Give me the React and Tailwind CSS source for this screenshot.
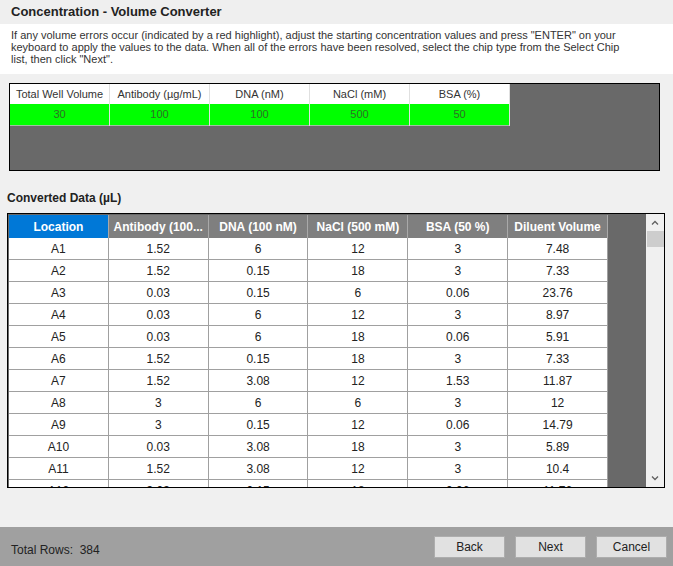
const topCols = [
  { label: "Total Well Volume", value: "30" },
  { label: "Antibody (µg/mL)", value: "100" },
  { label: "DNA (nM)", value: "100" },
  { label: "NaCl (mM)", value: "500" },
  { label: "BSA (%)", value: "50" },
];

const headers = ["Location", "Antibody (100...", "DNA (100 nM)", "NaCl (500 mM)", "BSA (50 %)", "Diluent Volume"];

const rows = [
  ["A1", "1.52", "6", "12", "3", "7.48"],
  ["A2", "1.52", "0.15", "18", "3", "7.33"],
  ["A3", "0.03", "0.15", "6", "0.06", "23.76"],
  ["A4", "0.03", "6", "12", "3", "8.97"],
  ["A5", "0.03", "6", "18", "0.06", "5.91"],
  ["A6", "1.52", "0.15", "18", "3", "7.33"],
  ["A7", "1.52", "3.08", "12", "1.53", "11.87"],
  ["A8", "3", "6", "6", "3", "12"],
  ["A9", "3", "0.15", "12", "0.06", "14.79"],
  ["A10", "0.03", "3.08", "18", "3", "5.89"],
  ["A11", "1.52", "3.08", "12", "3", "10.4"],
  ["A12", "3.03", "0.15", "18", "0.06", "11.76"],
];

const Button = ({ children }) => (
  <button className="w-[71px] h-[22px] bg-[#e1e1e1] border border-[#adadad] text-[12px] text-[#222]">
    {children}
  </button>
);

export default function App() {
  return (
    <div className="w-[673px] h-[566px] bg-[#f0f0f0] flex flex-col overflow-hidden font-['Liberation_Sans',Arial,sans-serif] text-[#222]">
      {/* title */}
      <div className="h-[24px] bg-[#efefef] flex items-center pl-[11px] text-[13px] font-bold">
        Concentration - Volume Converter
      </div>
      <div className="h-[50px] bg-white pl-[11px] pt-[5px] text-[11px] leading-[12px] text-[#333]">
        If any volume errors occur (indicated by a red highlight), adjust the starting concentration values and press "ENTER" on your
        <br />
        keyboard to apply the values to the data. When all of the errors have been resolved, select the chip type from the Select Chip
        <br />
        list, then click "Next".
      </div>

      {/* top grid */}
      <div className="mt-[9px] ml-[9px] w-[651px] h-[88px] border border-black bg-[#696969]">
        <div className="flex">
          {topCols.map((c) => (
            <div key={c.label} className="w-[100px] border-r border-[#e0e0e0]">
              <div className="h-[20px] bg-white flex items-center justify-center text-[11px] text-[#333]">{c.label}</div>
              <div className="h-[22px] bg-[#00ff00] flex items-center justify-center text-[11px] text-[#2f6f25] border-b border-[#a0c0a0]">
                {c.value}
              </div>
            </div>
          ))}
        </div>
      </div>

      <div className="mt-[18px] ml-[7px] text-[12px] font-bold">Converted Data (µL)</div>

      {/* converted grid */}
      <div className="mt-[6px] ml-[7px] w-[658px] h-[275px] border border-black bg-[#696969] flex overflow-hidden">
        <div className="w-[600px] flex flex-col pl-[1px] pt-[1px]">
          <div className="flex h-[23px] shrink-0">
            {headers.map((h, i) => (
              <div
                key={h}
                className={`w-[100px] flex items-center justify-center text-[12px] font-bold text-white border-r border-[#a9a9a9] ${
                  i === 0 ? "bg-[#0078d7]" : "bg-[#7f7f7f]"
                }`}
              >
                {h}
              </div>
            ))}
          </div>
          {rows.map((r) => (
            <div key={r[0]} className="flex h-[22px] shrink-0 bg-white border-b border-[#a0a0a0]">
              {r.map((v, i) => (
                <div key={i} className="w-[100px] flex items-center justify-center text-[12px] text-[#222] border-r border-[#a0a0a0]">
                  {v}
                </div>
              ))}
            </div>
          ))}
        </div>
        <div className="flex-1" />
        <div className="w-[18px] bg-[#f0f0f0] flex flex-col items-center">
          <div className="h-[17px] flex items-center justify-center">
            <svg width="8" height="5" viewBox="0 0 8 5">
              <path d="M1 4.5 L4 1.5 L7 4.5" stroke="#606060" strokeWidth="1.3" fill="none" />
            </svg>
          </div>
          <div className="w-[17px] h-[16px] bg-[#cdcdcd]" />
          <div className="flex-1" />
          <div className="h-[17px] flex items-center justify-center">
            <svg width="8" height="5" viewBox="0 0 8 5">
              <path d="M1 0.5 L4 3.5 L7 0.5" stroke="#606060" strokeWidth="1.3" fill="none" />
            </svg>
          </div>
        </div>
      </div>

      <div className="flex-1" />

      {/* footer */}
      <div className="h-[39px] bg-[#a0a0a0] flex items-center pl-[11px] pr-[6px]">
        <div className="text-[12px] text-[#222] mt-[6px]">Total Rows:&nbsp; 384</div>
        <div className="flex-1" />
        <div className="flex gap-[10px]">
          <Button>Back</Button>
          <Button>Next</Button>
          <Button>Cancel</Button>
        </div>
      </div>
    </div>
  );
}
